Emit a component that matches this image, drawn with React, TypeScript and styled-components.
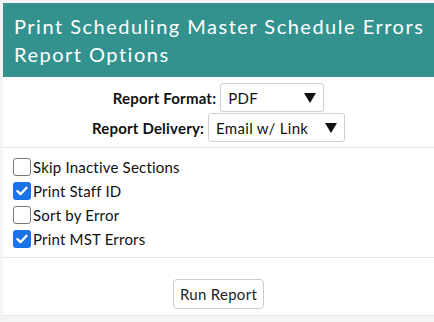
import styled, { createGlobalStyle } from 'styled-components';

const GlobalStyle = createGlobalStyle`
    html, body {
        margin: 0;
        padding: 0;
        background-color: #f4f4f4;
    }
    body {
        font-family: 'Lato', 'Noto Sans', sans-serif;
        color: #111;
    }
`;

const Page = styled.div`
    padding: 3px 0 0 3px;
`;

const Panel = styled.div`
    background-color: #ffffff;
    width: 431px;
`;

const Header = styled.div`
    background-color: #33928e;
    color: #ffffff;
    padding: 9px 0 9px 11px;
    font-size: 20px;
    line-height: 28px;
    letter-spacing: 1.5px;
    white-space: nowrap;
`;

const Section = styled.div`
    border-bottom: 1px solid #e4e4e4;
`;

const FormatList = styled.div`
    display: flex;
    flex-direction: column;
    gap: 1px;
    padding: 6px 0 5px;
`;

const FormatRow = styled.div`
    display: flex;
    justify-content: center;
    align-items: center;
    gap: 4px;
`;

const Label = styled.label`
    font-weight: bold;
    font-size: 15px;
    letter-spacing: 0.2px;
`;

const SelectBox = styled.div<{ width: number }>`
    display: flex;
    align-items: center;
    justify-content: space-between;
    box-sizing: border-box;
    width: ${props => props.width}px;
    height: 29px;
    padding: 0 7px 0 7px;
    border: 1px solid #cfcfcf;
    border-radius: 3px;
    font-size: 15px;
    letter-spacing: 0.3px;
`;

const Arrow = styled.span`
    width: 0;
    height: 0;
    border-left: 6px solid transparent;
    border-right: 6px solid transparent;
    border-top: 10px solid #111;
`;

const CheckList = styled.div`
    display: flex;
    flex-direction: column;
    gap: 6px;
    padding: 10px 10px 9px;
`;

const CheckRow = styled.label`
    display: flex;
    align-items: center;
    gap: 2px;
    font-size: 15px;
    letter-spacing: 0.2px;
`;

const Box = styled.span<{ checked: boolean }>`
    display: flex;
    align-items: center;
    justify-content: center;
    box-sizing: border-box;
    width: 18px;
    height: 18px;
    border-radius: 3px;
    border: ${props => props.checked ? 'none' : '1px solid #777'};
    background-color: ${props => props.checked ? '#1a73e8' : '#fff'};
`;

const Actions = styled.div`
    display: flex;
    justify-content: center;
    padding: 21px 0 6px;
`;

const Button = styled.button`
    font-family: 'Lato', 'Noto Sans', sans-serif;
    font-size: 15px;
    letter-spacing: 0.3px;
    color: #222;
    background-color: #fff;
    border: 1px solid #cccccc;
    border-radius: 4px;
    height: 30px;
    width: 91px;
    padding: 0;
`;

const options = [
    { label: 'Skip Inactive Sections', checked: false },
    { label: 'Print Staff ID', checked: true },
    { label: 'Sort by Error', checked: false },
    { label: 'Print MST Errors', checked: true },
];

const Check = () => (
    <svg width="12" height="10" viewBox="0 0 12 10">
        <path d="M1.5 5.2 L4.5 8.2 L10.5 1.8" fill="none" stroke="#fff" strokeWidth="2.4" strokeLinecap="round" strokeLinejoin="round" />
    </svg>
);

const App = () => {
    return (
        <Page>
            <GlobalStyle />
            <Panel>
                <Header>
                    Print Scheduling Master Schedule Errors<br />
                    Report Options
                </Header>
                <Section>
                    <FormatList>
                        <FormatRow>
                            <Label>Report Format:</Label>
                            <SelectBox width={104}>PDF<Arrow /></SelectBox>
                        </FormatRow>
                        <FormatRow>
                            <Label>Report Delivery:</Label>
                            <SelectBox width={137}>Email w/ Link<Arrow /></SelectBox>
                        </FormatRow>
                    </FormatList>
                </Section>
                <Section>
                    <CheckList>
                        {options.map(option => (
                            <CheckRow key={option.label}>
                                <Box checked={option.checked}>{option.checked && <Check />}</Box>
                                {option.label}
                            </CheckRow>
                        ))}
                    </CheckList>
                </Section>
                <Section>
                    <Actions>
                        <Button>Run Report</Button>
                    </Actions>
                </Section>
            </Panel>
        </Page>
    );
};

export default App;
